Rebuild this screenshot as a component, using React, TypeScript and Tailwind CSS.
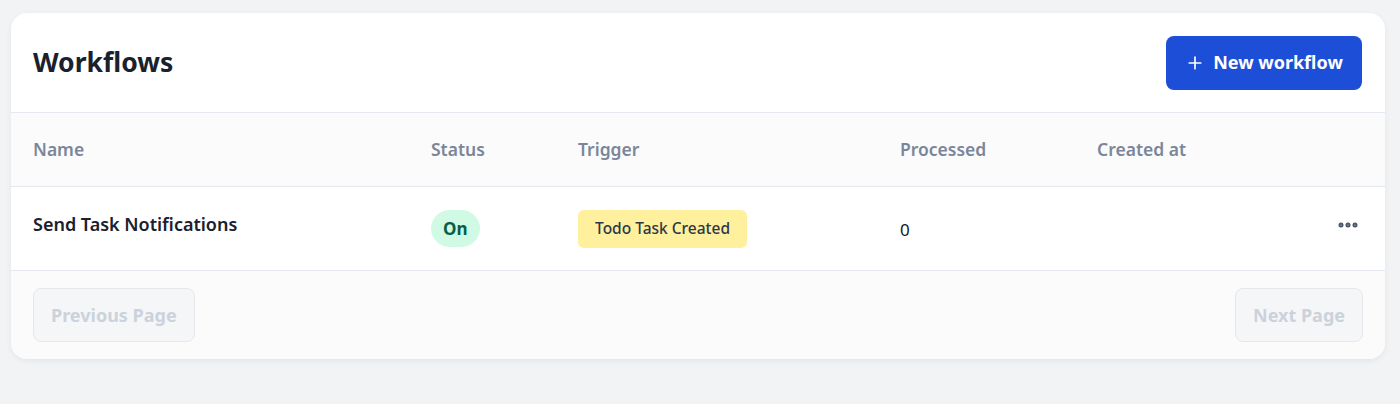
import React from 'react'
import { Plus, MoreHorizontal } from 'lucide-react'

const cols = 'grid grid-cols-[420px_147px_322px_197px_1fr_80px] items-center'

type Workflow = {
  id: string
  name: string
  enabled: boolean
  trigger: string
  processed: number
  createdAt: string
}

const workflows: Workflow[] = [
  {
    id: 'wf_1',
    name: 'Send Task Notifications',
    enabled: true,
    trigger: 'Todo Task Created',
    processed: 0,
    createdAt: '',
  },
]

function PageButton({ label }: { label: string }) {
  return (
    <button
      disabled
      className="h-[54px] px-[17px] rounded-lg border border-[#e5e7eb] bg-[#f5f6f8] text-[18px] font-bold text-[#cbd2dc] cursor-not-allowed"
    >
      {label}
    </button>
  )
}

export default function App() {
  return (
    <div
      className="min-h-[404px] bg-[#f2f3f5] pl-[11px] pr-[15px] pt-[13px]"
      style={{ fontFamily: '"Noto Sans", "Open Sans", sans-serif' }}
    >
      <div className="bg-white rounded-2xl shadow-[0_2px_6px_rgba(0,0,0,0.06)] overflow-hidden">
        {/* Header */}
        <div className="h-[100px] flex items-center justify-between pl-[22px] pr-[23px] border-b border-[#e5e9ef]">
          <h1 className="text-[26.5px] font-bold text-[#1a202c]">Workflows</h1>
          <button className="h-[54px] w-[196px] flex items-center justify-center gap-2 rounded-lg bg-[#1d4ed8] text-white text-[18px] font-bold">
            <Plus className="h-5 w-5" strokeWidth={2} />
            New workflow
          </button>
        </div>

        {/* Table head */}
        <div className={`${cols} h-[74px] bg-[#fbfbfc] border-b border-[#e5e9ef] text-[17.5px] font-semibold text-[#7a8699]`}>
          <div className="pl-[22px]">Name</div>
          <div>Status</div>
          <div>Trigger</div>
          <div>Processed</div>
          <div>Created at</div>
          <div />
        </div>

        {/* Rows */}
        {workflows.map((wf) => (
          <div key={wf.id} className={`${cols} h-[84px] border-b border-[#e5e9ef]`}>
            <div className="pl-[22px] pb-[8px] text-[18px] font-semibold text-[#1a202c]">{wf.name}</div>
            <div>
              <span className="inline-flex items-center h-[37px] px-[12px] rounded-full bg-[#d1fae5] text-[#065f46] text-[17px] font-bold">
                {wf.enabled ? 'On' : 'Off'}
              </span>
            </div>
            <div>
              <span className="inline-flex items-center h-[38px] px-[17px] rounded-md bg-[#fef09c] text-[#2d3748] text-[15.5px] font-medium">
                {wf.trigger}
              </span>
            </div>
            <div className="pt-[3px] text-[17px] text-[#111827]">{wf.processed}</div>
            <div className="text-[17px] text-[#111827]">{wf.createdAt}</div>
            <div className="flex justify-end pr-[25px] pb-[8px]">
              <MoreHorizontal className="h-6 w-6 text-[#4a5568]" strokeWidth={3} />
            </div>
          </div>
        ))}

        {/* Footer */}
        <div className="h-[88px] bg-[#fbfbfc] flex items-center justify-between px-[22px]">
          <PageButton label="Previous Page" />
          <PageButton label="Next Page" />
        </div>
      </div>
    </div>
  )
}
